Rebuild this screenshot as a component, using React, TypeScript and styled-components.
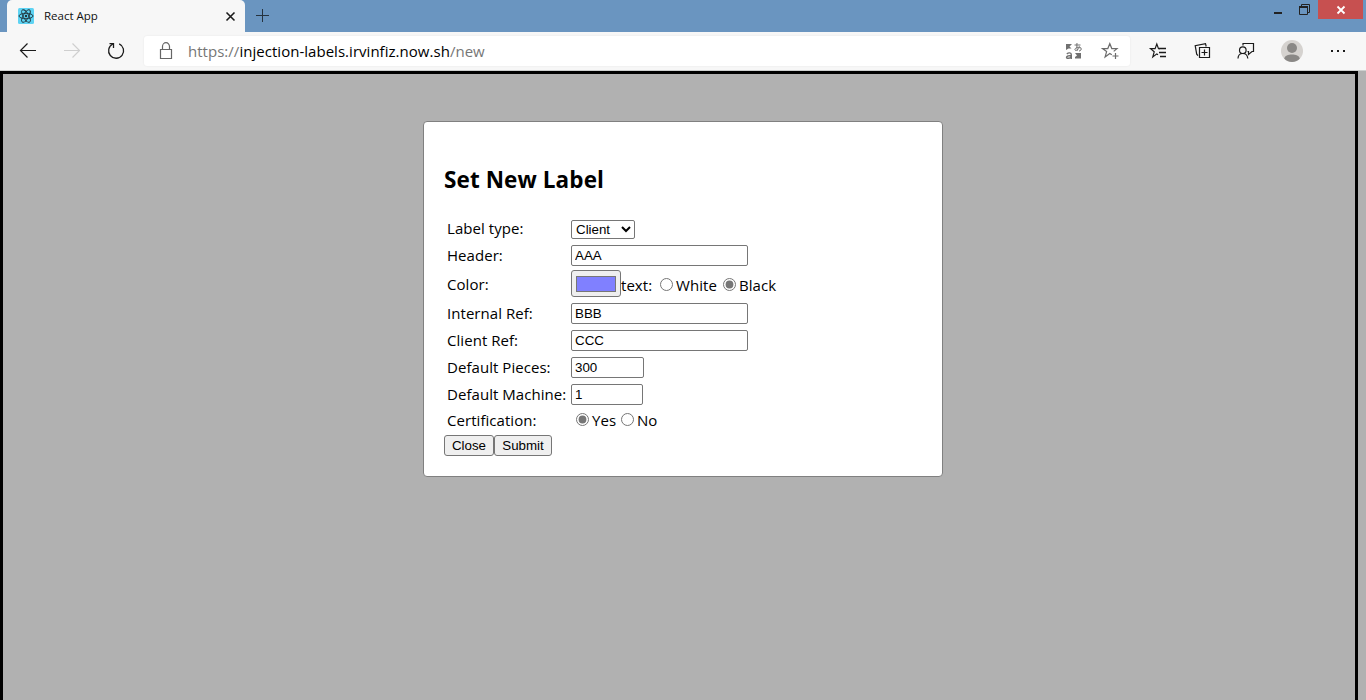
import React from "react";
import styled, { createGlobalStyle } from "styled-components";

const GlobalStyle = createGlobalStyle`
  html, body { margin: 0; height: 100%; overflow: hidden; }
  body { font-family: "Open Sans", "Noto Sans", sans-serif; font-weight: 400; color: #000; }
  *, *::before, *::after { box-sizing: border-box; }
`;

const Window = styled.div`
  display: flex;
  flex-direction: column;
  width: 1366px;
  height: 700px;
  overflow: hidden;
  background: #b1b1b1;
`;

const TabStrip = styled.header`
  display: flex;
  height: 32px;
  flex: none;
  padding-left: 7px;
  background: #6a95c0;
`;

const Tab = styled.div`
  display: flex;
  align-items: center;
  width: 238px;
  height: 32px;
  padding: 0 9px 0 11px;
  border-radius: 5px 5px 0 0;
  background: #f7f7f7;
`;

const TabTitle = styled.span`
  flex: 1;
  margin-left: 10px;
  font-size: 11.5px;
  line-height: 16px;
  letter-spacing: 0;
  color: #111;
`;

const NewTab = styled.div`
  display: flex;
  width: 34px;
  height: 32px;
  padding: 9px 0 0 11px;
`;

const WindowControls = styled.div`
  display: flex;
  margin-left: auto;
  padding-right: 3px;
`;

const WindowButton = styled.div<{ $width: number; $danger?: boolean }>`
  display: flex;
  align-items: center;
  justify-content: center;
  width: ${(p) => p.$width}px;
  height: 19px;
  background: ${(p) => (p.$danger ? "#c75050" : "transparent")};
`;

const Toolbar = styled.nav`
  display: flex;
  align-items: center;
  flex: none;
  height: 39px;
  padding: 0 0 0 16px;
  background: #f7f7f7;
  border-bottom: 1px solid #cfd1d0;
`;

const ToolIcon = styled.div<{ $gap?: number }>`
  display: flex;
  flex: none;
  width: 24px;
  height: 24px;
  margin-right: ${(p) => p.$gap ?? 20}px;
`;

const AddressBar = styled.div`
  display: flex;
  align-items: center;
  flex: none;
  width: 986px;
  height: 30px;
  margin-right: 17px;
  padding: 0 8px 0 10px;
  border-radius: 3px;
  background: #fff;
  box-shadow: 0 0 2px rgba(0, 0, 0, 0.08);
`;

const Url = styled.span`
  flex: 1;
  margin-left: 10px;
  font-size: 15px;
  line-height: 22px;
  letter-spacing: 0.03px;
  color: #767676;
`;

const Host = styled.span`
  color: #000;
`;

const Viewport = styled.main`
  flex: 1;
  width: 1358px;
  padding-top: 47px;
  border: 3px solid #000;
  border-bottom: 0;
`;

const Modal = styled.section`
  width: 520px;
  height: 356px;
  margin-left: 420px;
  padding: 42px 20px 0;
  border: 1px solid #808080;
  border-radius: 4px;
  background: #fff;
`;

const Heading = styled.h2`
  margin: 0;
  height: 52px;
  font-size: 22.5px;
  line-height: 32px;
  letter-spacing: 0.1px;
  font-weight: 700;
  white-space: nowrap;
`;

const Fields = styled.div`
  display: grid;
  grid-template-columns: 124px 1fr;
  grid-template-rows: 26px 27px 31px 27px 27px 27px 27px 25px;
  padding-left: 3px;
  height: 219px;
`;

const Label = styled.label<{ $lift?: number }>`
  display: flex;
  align-items: center;
  padding-bottom: ${(p) => p.$lift ?? 0}px;
  font-size: 15px;
  line-height: 21px;
  letter-spacing: 0.05px;
  white-space: nowrap;
`;

const Cell = styled.div<{ $lift?: number }>`
  display: flex;
  align-items: center;
  padding-bottom: ${(p) => p.$lift ?? 0}px;
  font-size: 15px;
  letter-spacing: 0.05px;
  white-space: nowrap;
`;

const controlFont = `
  font-family: "Liberation Sans", Arial, sans-serif;
  font-size: 13.333px;
  font-weight: 400;
  color: #000;
`;

const Input = styled.input<{ $width?: number }>`
  ${controlFont}
  width: ${(p) => p.$width ?? 177}px;
  height: 21px;
  margin: 0;
  padding: 1px 3px;
  border: 1px solid #767676;
  border-radius: 2px;
  background: #fff;
`;

const Select = styled.select`
  ${controlFont}
  width: 64px;
  height: 19px;
  margin: 1px 0 0;
  padding: 0;
  border: 1px solid #767676;
  border-radius: 2px;
  background: #fff;
`;

const Swatch = styled.div`
  width: 50px;
  height: 27px;
  padding: 5px 4px;
  border: 1px solid #767676;
  border-radius: 3px;
  background: #efefef;
  margin-top: -2px;
`;

const SwatchColor = styled.div`
  height: 16px;
  border: 1px solid #777;
  background: #8080ff;
`;

const Radio = styled.input<{ $left: number }>`
  width: 13px;
  height: 13px;
  margin: 0 3px 0 ${(p) => p.$left}px;
  accent-color: #767676;
`;

const Word = styled.span<{ $width: number }>`
  width: ${(p) => p.$width}px;
  line-height: 21px;
  margin-top: 1px;
`;

const Actions = styled.div`
  display: flex;
`;

const Button = styled.button<{ $width: number }>`
  ${controlFont}
  width: ${(p) => p.$width}px;
  height: 21px;
  padding: 0;
  border: 1px solid #767676;
  border-radius: 3px;
  background: #efefef;
`;

const Glyph = ({
  children,
  color = "#1b1b1b",
  width = 1.2,
  size = 24,
}: {
  children: React.ReactNode;
  color?: string;
  width?: number;
  size?: number;
}) => (
  <svg width={size} height={size} viewBox={`0 0 ${size} ${size}`} fill="none" stroke={color} strokeWidth={width}>
    {children}
  </svg>
);

const ReactLogo = () => (
  <svg width="16" height="16" viewBox="0 0 16 16" fill="none" stroke="#20333a" strokeWidth="0.9">
    <rect width="16" height="16" rx="1.5" fill="#5ed3f3" stroke="none" />
    <ellipse cx="8" cy="8" rx="7" ry="2.7" />
    <ellipse cx="8" cy="8" rx="7" ry="2.7" transform="rotate(60 8 8)" />
    <ellipse cx="8" cy="8" rx="7" ry="2.7" transform="rotate(120 8 8)" />
    <circle cx="8" cy="8" r="1.2" fill="#20333a" stroke="none" />
  </svg>
);

export default function App() {
  return (
    <Window>
      <GlobalStyle />
      <TabStrip>
        <Tab>
          <ReactLogo />
          <TabTitle>React App</TabTitle>
          <Glyph size={11} width={1.6}>
            <path d="M1.5 1.5L9.5 9.5M9.5 1.5L1.5 9.5" />
          </Glyph>
        </Tab>
        <NewTab>
          <Glyph size={13} width={1} color="#26333f">
            <path d="M6.5 0V13M0 6.5H13" />
          </Glyph>
        </NewTab>
        <WindowControls>
          <WindowButton $width={26}>
            <Glyph size={16} width={2} color="#222">
              <path d="M4 11H12" />
            </Glyph>
          </WindowButton>
          <WindowButton $width={27}>
            <Glyph size={11} width={1} color="#222">
              <path d="M2.5 2V0.5H10.5V8.5H9" />
              <path d="M0.5 3V10.5H8.5V3" />
              <path d="M0 3H9" strokeWidth="2" />
            </Glyph>
          </WindowButton>
          <WindowButton $width={45} $danger>
            <Glyph size={10} width={1.8} color="#fff">
              <path d="M1.5 1.5L8.5 8.5M8.5 1.5L1.5 8.5" />
            </Glyph>
          </WindowButton>
        </WindowControls>
      </TabStrip>

      <Toolbar>
        <ToolIcon>
          <Glyph>
            <path d="M4.5 11.5H20M11.5 4.5L4.5 11.5L11.5 18.5" />
          </Glyph>
        </ToolIcon>
        <ToolIcon>
          <Glyph color="#cfcfcf">
            <path d="M4 11.5H19.5M12.5 4.5L19.5 11.5L12.5 18.5" />
          </Glyph>
        </ToolIcon>
        <ToolIcon $gap={16}>
          <Glyph width={1.3}>
            <path d="M15.2 4.9A7.5 7.5 0 1 1 8.8 5" />
            <path d="M5.5 4.7H9.5V9" />
          </Glyph>
        </ToolIcon>
        <AddressBar>
          <ToolIcon $gap={0}>
            <Glyph color="#666">
              <path d="M6.5 10.5H17.5V19.5H6.5ZM8.5 10.5V7.5A3.5 3.8 0 0 1 15.5 7.5V10.5" />
            </Glyph>
          </ToolIcon>
          <Url>
            https://<Host>injection-labels.irvinfiz.now.sh</Host>/new
          </Url>
          <ToolIcon $gap={12}>
            <Glyph color="#707070">
              <path d="M4 5H10L7.5 7.5L9.5 9.5H6.5L4 11Z" fill="#707070" stroke="none" />
              <path d="M12.5 6H18.5M15 4C14.7 7 14.8 9 15.5 11.5M17.5 7.5C17 10.5 14 12.5 13 11C12.2 9 17 7.2 18.8 8.8C20 10.5 18.5 12 17 12" strokeWidth="1" />
              <path d="M4.8 14.9C6.5 13.4 9.3 13.4 9.3 15.8V20M9.3 16.5C3.8 16.5 3.5 19.5 6.2 19.3C8 19.2 9.3 18 9.3 17" strokeWidth="1.4" />
              <path d="M13 14H19V19.5H13V18L15 16.5Z" fill="#707070" stroke="none" />
            </Glyph>
          </ToolIcon>
          <ToolIcon $gap={0}>
            <Glyph color="#6b6b6b">
              <path d="M13.8 15.8L11.8 14.5L7.1 18L8.6 12.6L4.5 9.6H9.8L11.8 4.7L13.8 9.6H19L15.7 12.4" />
              <path d="M17.5 14V20M14.5 17H20.5" />
            </Glyph>
          </ToolIcon>
        </AddressBar>
        <ToolIcon $gap={20}>
          <Glyph>
            <path d="M11 15.8L9.8 14.9L5.8 18L7.2 12.8L3.5 9.6H8.1L9.8 5L11.5 9.6H13" />
            <path d="M12 9.5H19M12 13.5H19M13 17.5H19" strokeWidth="1.4" />
          </Glyph>
        </ToolIcon>
        <ToolIcon $gap={19}>
          <Glyph>
            <path d="M8.5 8.5H18.5V18.5H8.5ZM13.5 10.5V16.5M10.5 13.5H16.5" />
            <path d="M7 16.7L5.7 15.2L4.2 6.7L14.5 4.6L15.2 7.5" />
          </Glyph>
        </ToolIcon>
        <ToolIcon $gap={22}>
          <Glyph>
            <circle cx="8.8" cy="11.2" r="3.3" />
            <path d="M4 19.5C4.2 12.8 13.2 12.8 13.8 19.5M9 6.5V4.5H19.5V12.5H18L14.5 15.5V12.5H13.5" />
          </Glyph>
        </ToolIcon>
        <ToolIcon $gap={23}>
          <Glyph>
            <circle cx="12" cy="12" r="11" fill="#d5d2cf" stroke="none" />
            <circle cx="12" cy="9" r="5" fill="#8a8886" stroke="none" />
            <path d="M4.2 19.5C5 14 19 14 19.8 19.5C16.5 24 7.5 24 4.2 19.5Z" fill="#8a8886" stroke="none" />
          </Glyph>
        </ToolIcon>
        <ToolIcon $gap={0}>
          <Glyph>
            <path d="M4 12H6M10 12H12M16 12H18" strokeWidth="2" />
          </Glyph>
        </ToolIcon>
      </Toolbar>

      <Viewport>
        <Modal>
          <Heading>Set New Label</Heading>
          <Fields>
            <Label $lift={2}>Label type:</Label>
            <Cell>
              <Select defaultValue="Client">
                <option>Client</option>
              </Select>
            </Cell>
            <Label>Header:</Label>
            <Cell>
              <Input defaultValue="AAA" />
            </Cell>
            <Label>Color:</Label>
            <Cell>
              <Swatch>
                <SwatchColor />
              </Swatch>
              <Word $width={34}>text:</Word>
              <Radio $left={5} type="radio" name="text" readOnly />
              <Word $width={42}>White</Word>
              <Radio $left={5} type="radio" name="text" defaultChecked />
              <Word $width={40}>Black</Word>
            </Cell>
            <Label>Internal Ref:</Label>
            <Cell>
              <Input defaultValue="BBB" />
            </Cell>
            <Label>Client Ref:</Label>
            <Cell>
              <Input defaultValue="CCC" />
            </Cell>
            <Label>Default Pieces:</Label>
            <Cell>
              <Input defaultValue="300" $width={73} />
            </Cell>
            <Label>Default Machine:</Label>
            <Cell>
              <Input defaultValue="1" $width={72} />
            </Cell>
            <Label>Certification:</Label>
            <Cell $lift={2}>
              <Radio $left={5} type="radio" name="cert" defaultChecked />
              <Word $width={24}>Yes</Word>
              <Radio $left={5} type="radio" name="cert" readOnly />
              <Word $width={24}>No</Word>
            </Cell>
          </Fields>
          <Actions>
            <Button $width={50}>Close</Button>
            <Button $width={58}>Submit</Button>
          </Actions>
        </Modal>
      </Viewport>
    </Window>
  );
}
